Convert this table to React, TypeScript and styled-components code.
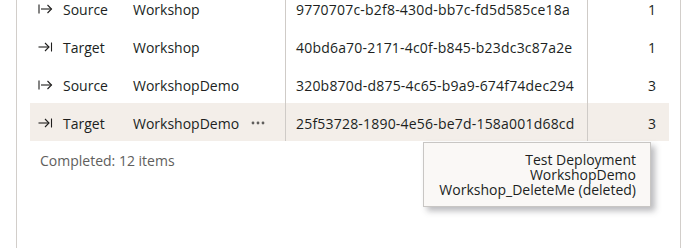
import React from 'react';
import styled, { createGlobalStyle } from 'styled-components';

type Direction = 'source' | 'target';

interface Row {
  direction: Direction;
  name: string;
  id: string;
  count: number;
  hovered?: boolean;
}

const rows: Row[] = [
  { direction: 'source', name: 'Workshop', id: '9770707c-b2f8-430d-bb7c-fd5d585ce18a', count: 1 },
  { direction: 'target', name: 'Workshop', id: '40bd6a70-2171-4c0f-b845-b23dc3c87a2e', count: 1 },
  { direction: 'source', name: 'WorkshopDemo', id: '320b870d-d875-4c65-b9a9-674f74dec294', count: 3 },
  { direction: 'target', name: 'WorkshopDemo', id: '25f53728-1890-4e56-be7d-158a001d68cd', count: 3, hovered: true },
];

const GlobalStyle = createGlobalStyle`
  html, body {
    margin: 0;
    padding: 0;
    height: 100%;
    background: #ffffff;
    overflow: hidden;
  }
  body {
    font-family: 'Open Sans', 'Noto Sans', sans-serif;
    font-size: 14px;
    color: #201f1e;
  }
`;

const Panel = styled.div`
  position: relative;
  display: flow-root;
  margin-left: 16px;
  width: 665px;
  height: 248px;
  border-left: 1px solid #d2ceca;
  border-right: 1px solid #d2ceca;
  padding: 0 11px 0 13px;
  box-sizing: border-box;
  overflow: hidden;
`;

const Table = styled.div`
  margin-top: -11px;
`;

const TableRow = styled.div<{ $hovered?: boolean }>`
  display: grid;
  grid-template-columns: 95px 161px 302px 1fr;
  height: 38px;
  background: ${p => (p.$hovered ? '#f3eee9' : 'transparent')};
`;

const Cell = styled.div<{ $divider?: boolean; $align?: 'left' | 'right' }>`
  display: flex;
  align-items: center;
  justify-content: ${p => (p.$align === 'right' ? 'flex-end' : 'flex-start')};
  padding: 2px ${p => (p.$align === 'right' ? '13px' : '8px')} 0 8px;
  border-right: ${p => (p.$divider ? '1px solid #cfcbc7' : 'none')};
  white-space: nowrap;
  overflow: hidden;
  box-sizing: border-box;
`;

const DirectionCell = styled(Cell)`
  gap: 10px;
`;

const NameCell = styled(Cell)`
  justify-content: space-between;
  padding-right: 20px;
`;

const IdCell = styled(Cell)`
  padding-left: 10px;
  letter-spacing: 0.2px;
`;

const MoreDots = styled.svg`
  flex: none;
  color: #605e5c;
`;

const Footer = styled.div`
  padding: 10px 0 0 10px;
  color: #605e5c;
`;

const Tooltip = styled.div`
  position: absolute;
  left: 406px;
  top: 142px;
  width: 228px;
  height: 65px;
  box-sizing: border-box;
  background: #faf8f6;
  border: 1px solid #c8c6c4;
  box-shadow: 4px 4px 6px rgba(60, 60, 70, 0.35);
  padding: 9px 14px 0 0;
  text-align: right;
  line-height: 15px;
  color: #201f1e;
`;

const DirectionIcon: React.FC<{ direction: Direction }> = ({ direction }) => (
  <svg width="15" height="10" viewBox="0 0 15 10" fill="none" stroke="#201f1e" strokeWidth="1.1">
    {direction === 'source' ? (
      <>
        <line x1="1" y1="0.5" x2="1" y2="9.5" />
        <line x1="3" y1="5" x2="13.5" y2="5" />
        <polyline points="9.5,1 13.5,5 9.5,9" />
      </>
    ) : (
      <>
        <line x1="0.5" y1="5" x2="11" y2="5" />
        <polyline points="7,1 11,5 7,9" />
        <line x1="13.5" y1="0.5" x2="13.5" y2="9.5" />
      </>
    )}
  </svg>
);

const App: React.FC = () => (
  <>
    <GlobalStyle />
    <Panel>
      <Table>
        {rows.map(row => (
          <TableRow key={row.id} $hovered={row.hovered}>
            <DirectionCell>
              <DirectionIcon direction={row.direction} />
              {row.direction === 'source' ? 'Source' : 'Target'}
            </DirectionCell>
            <NameCell $divider>
              {row.name}
              {row.hovered && (
                <MoreDots width="14" height="4" viewBox="0 0 14 4">
                  <circle cx="2" cy="2" r="1.4" fill="currentColor" />
                  <circle cx="7" cy="2" r="1.4" fill="currentColor" />
                  <circle cx="12" cy="2" r="1.4" fill="currentColor" />
                </MoreDots>
              )}
            </NameCell>
            <IdCell $divider>{row.id}</IdCell>
            <Cell $align="right">{row.count}</Cell>
          </TableRow>
        ))}
      </Table>
      <Footer>Completed: 12 items</Footer>
      <Tooltip>
        Test Deployment
        <br />
        WorkshopDemo
        <br />
        Workshop_DeleteMe (deleted)
      </Tooltip>
    </Panel>
  </>
);

export default App;
